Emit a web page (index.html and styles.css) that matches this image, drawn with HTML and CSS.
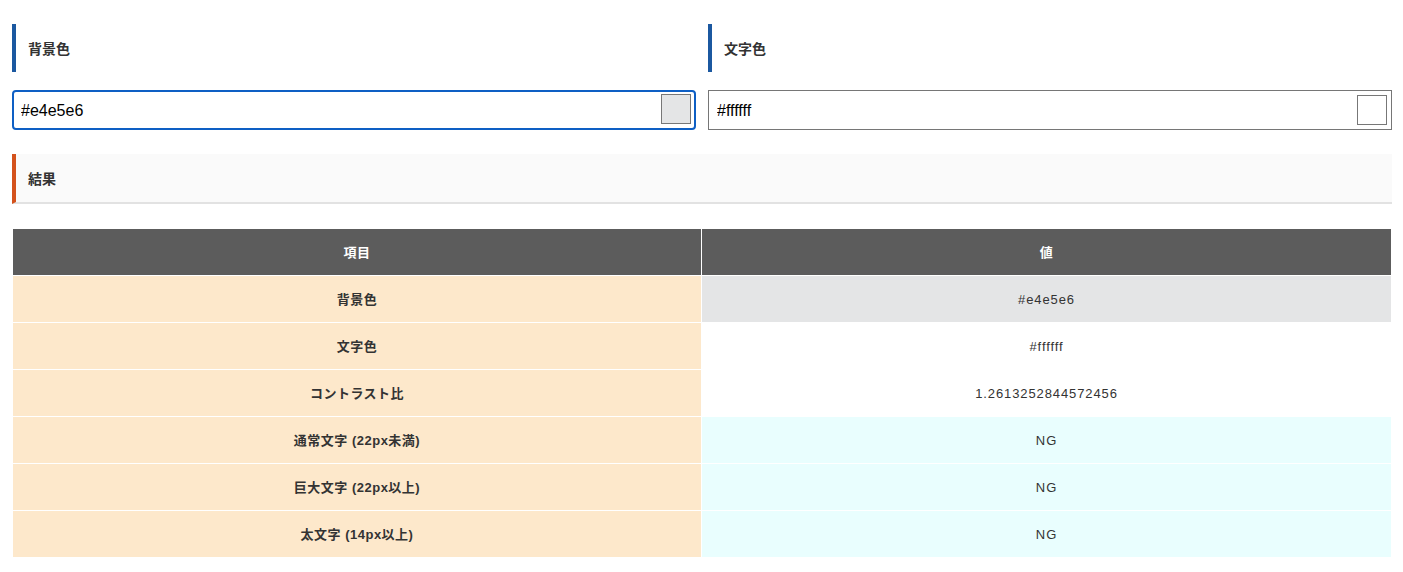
FILE: index.html
```html
<!DOCTYPE html>
<html lang="ja">
<head>
<meta charset="utf-8">
<title>コントラスト比チェック</title>
<link rel="stylesheet" href="styles.css">
</head>
<body>
<div class="page">
  <div class="pickers">
    <div class="picker">
      <h2 class="heading">背景色</h2>
      <div class="field">
        <input class="text-input is-focused" type="text" value="#e4e5e6">
        <span class="swatch swatch-bg"></span>
      </div>
    </div>
    <div class="picker">
      <h2 class="heading">文字色</h2>
      <div class="field">
        <input class="text-input" type="text" value="#ffffff">
        <span class="swatch swatch-fg"></span>
      </div>
    </div>
  </div>

  <h2 class="result-heading">結果</h2>

  <table class="result-table">
    <colgroup><col class="col-left"><col class="col-right"></colgroup>
    <thead>
      <tr><th>項目</th><th>値</th></tr>
    </thead>
    <tbody>
      <tr><th>背景色</th><td class="val-bg">#e4e5e6</td></tr>
      <tr><th>文字色</th><td class="val-fg">#ffffff</td></tr>
      <tr><th>コントラスト比</th><td class="val-plain">1.2613252844572456</td></tr>
      <tr><th>通常文字 (22px未満)</th><td class="val-ng">NG</td></tr>
      <tr><th>巨大文字 (22px以上)</th><td class="val-ng">NG</td></tr>
      <tr><th>太文字 (14px以上)</th><td class="val-ng">NG</td></tr>
    </tbody>
  </table>
</div>
</body>
</html>
```

FILE: styles.css
```css
* { box-sizing: border-box; }

body {
  margin: 0;
  background: #ffffff;
  font-family: "Liberation Sans", "Noto Sans CJK JP", sans-serif;
  color: #333333;
}

.page {
  width: 1380px;
  margin-left: 12px;
  padding-top: 24px;
}

.pickers {
  display: flex;
  gap: 12px;
}

.picker {
  flex: 1;
  min-width: 0;
}

.heading {
  margin: 0;
  height: 48px;
  display: flex;
  align-items: center;
  padding-left: 12px;
  border-left: 4px solid #1b58a0;
  font-size: 14px;
  font-weight: bold;
  color: #333333;
}

.field {
  position: relative;
  margin-top: 18px;
  height: 40px;
}

.text-input {
  display: block;
  width: 100%;
  height: 40px;
  margin: 0;
  padding: 2px 8px 0;
  border: 1px solid #767676;
  border-radius: 0;
  font-family: "Liberation Sans", sans-serif;
  font-size: 16px;
  color: #000000;
  background: #ffffff;
  outline: none;
}

.text-input.is-focused {
  border: 2px solid #0e5fc4;
  border-radius: 4px;
  padding-left: 7px;
}

.swatch {
  position: absolute;
  top: 5px;
  right: 5px;
  width: 30px;
  height: 30px;
  border: 1px solid #777777;
}

.swatch-bg { background: #e4e5e6; top: 4px; }
.swatch-fg { background: #ffffff; }

.result-heading {
  margin: 24px 0 0;
  height: 50px;
  display: flex;
  align-items: center;
  padding-left: 12px;
  background: #fafafa;
  border-left: 4px solid #d4521c;
  border-bottom: 2px solid #e2e2e2;
  font-size: 14px;
  font-weight: bold;
  color: #333333;
}

.result-table {
  margin-top: 24px;
  width: 1380px;
  border-collapse: separate;
  border-spacing: 1px;
  table-layout: fixed;
  font-size: 13px;
}

.col-left { width: 688px; }
.col-right { width: auto; }

.result-table th,
.result-table td {
  height: 46px;
  padding: 2px 8px 0;
  text-align: center;
  vertical-align: middle;
  font-family: "Liberation Sans", "Noto Sans CJK JP", sans-serif;
  line-height: 1.2;
}

.result-table thead th {
  background: #5c5c5c;
  color: #ffffff;
  font-weight: bold;
  letter-spacing: 0.5px;
}

.result-table tbody th {
  background: #fde8cb;
  color: #333333;
  font-weight: bold;
  letter-spacing: 0.5px;
}

.result-table td {
  color: #333333;
  font-weight: normal;
  letter-spacing: 0.9px;
}

.val-bg { background: #e4e5e6; }
.val-fg { background: #ffffff; }
.val-plain { background: #ffffff; }
.val-ng { background: #e9fefe; }
```
